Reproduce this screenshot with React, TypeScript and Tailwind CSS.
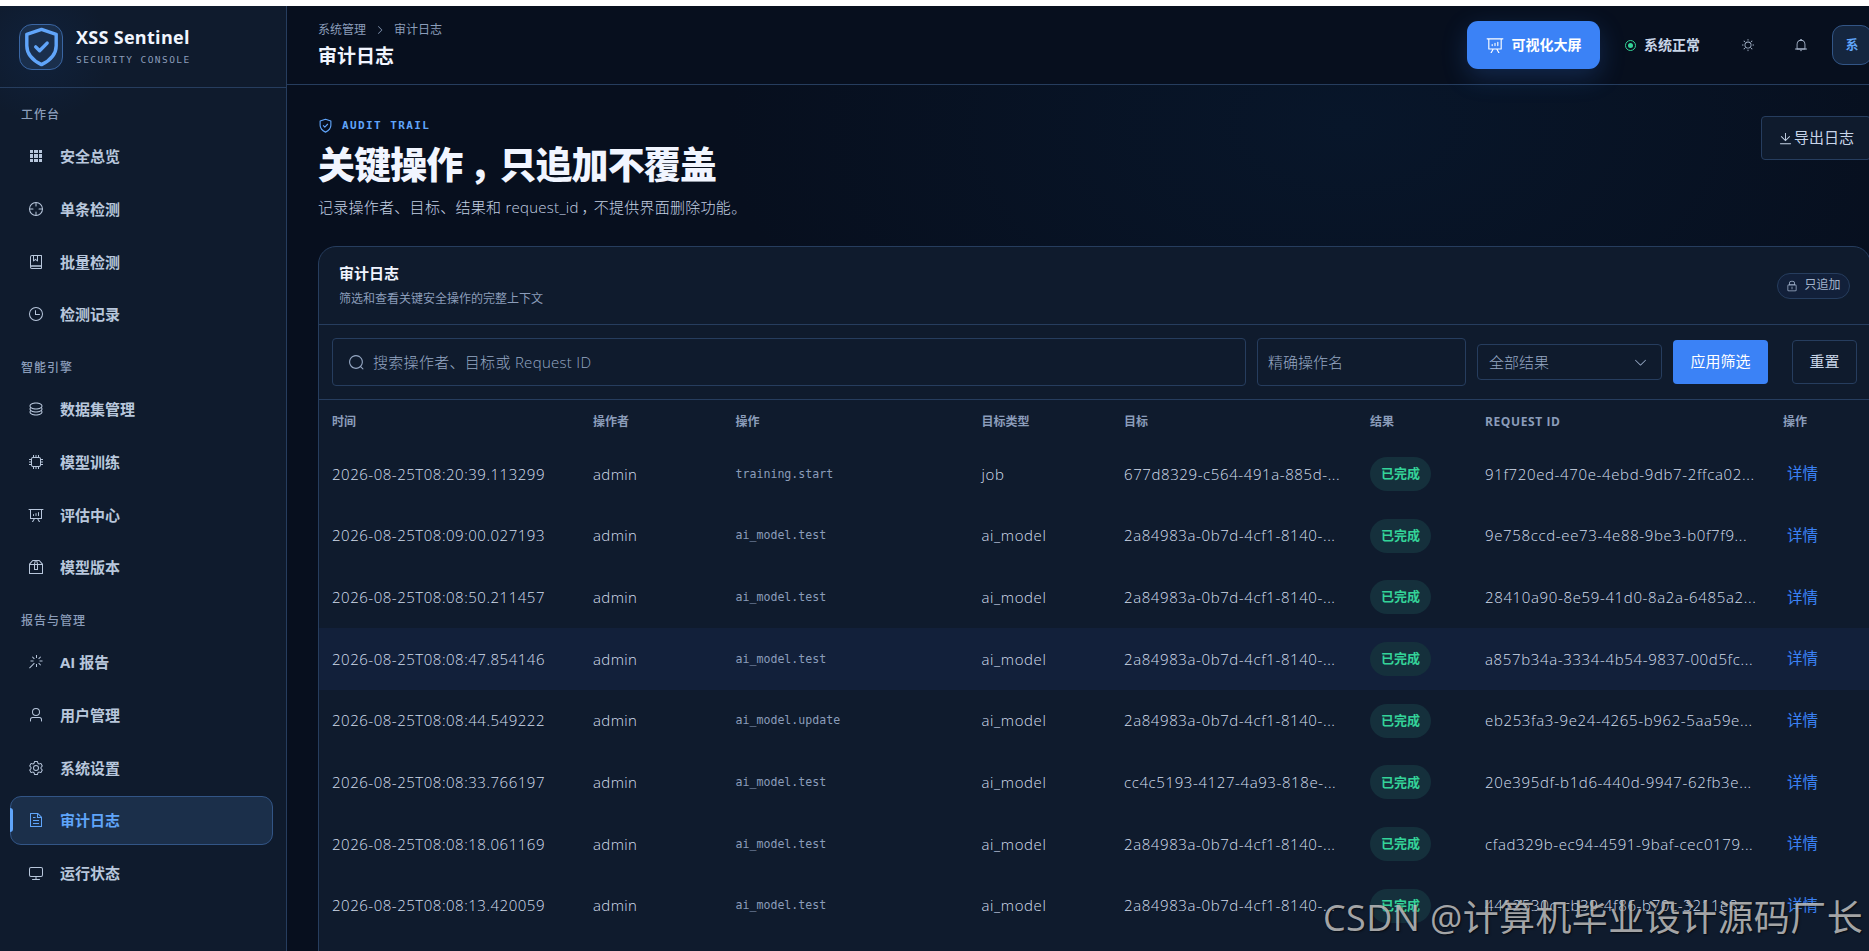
type IconProps = { d: string[]; className?: string };

// All line icons share the 1024 grid.
function Icon({ d, className = "" }: IconProps) {
  return (
    <svg viewBox="0 0 1024 1024" fill="currentColor" aria-hidden="true" className={`shrink-0 ${className}`}>
      {d.map((path) => (
        <path key={path} d={path} />
      ))}
    </svg>
  );
}

function Shield({ className = "", width = 2 }: { className?: string; width?: number }) {
  return (
    <svg viewBox="0 0 24 24" fill="none" stroke="currentColor" strokeWidth={width} strokeLinejoin="round" className={`shrink-0 ${className}`}>
      <path d="M12 2 20.600 4.900V11.500c0 5-3.400 8.500-8.600 11.100C6.800 20 3.400 16.500 3.400 11.500V4.900z" />
      <path d="m8.600 12.200 2.300 2.300 4.400-4.500" strokeLinecap="round" />
    </svg>
  );
}

const RING = "M512 896a384 384 0 1 0 0-768 384 384 0 0 0 0 768m0 64a448 448 0 1 1 0-896 448 448 0 0 1 0 896";

const ICONS = {
  grid: ["M640 384v256H384V384zm64 0h192v256H704zm-64 512H384V704h256zm64 0V704h192v192zm-64-768v192H384V128zm64 0h192v192H704zM320 384v256H128V384zm0 512H128V704h192zm0-768v192H128V128z"],
  aim: [
    RING,
    "M512 96a32 32 0 0 1 32 32v192a32 32 0 0 1-64 0V128a32 32 0 0 1 32-32m0 576a32 32 0 0 1 32 32v192a32 32 0 1 1-64 0V704a32 32 0 0 1 32-32M96 512a32 32 0 0 1 32-32h192a32 32 0 0 1 0 64H128a32 32 0 0 1-32-32m576 0a32 32 0 0 1 32-32h192a32 32 0 1 1 0 64H704a32 32 0 0 1-32-32",
  ],
  collection: [
    "M192 736h640V128H256a64 64 0 0 0-64 64zm64-672h608a32 32 0 0 1 32 32v672a32 32 0 0 1-32 32H160l-32 57.536V192A128 128 0 0 1 256 64",
    "M240 800a48 48 0 1 0 0 96h592v-96zm0-64h656v160a64 64 0 0 1-64 64H240a112 112 0 0 1 0-224m144-608v250.880l96-76.800 96 76.800V128zm-64-64h320v381.440a32 32 0 0 1-51.968 24.960L480 384l-108.032 86.400A32 32 0 0 1 320 445.440z",
  ],
  clock: [RING, "M480 256a32 32 0 0 1 32 32v256a32 32 0 0 1-64 0V288a32 32 0 0 1 32-32", "M480 512h256q32 0 32 32t-32 32H480q-32 0-32-32t32-32"],
  coin: [
    "m161.920 580.736 29.888 58.880C171.328 659.776 160 681.728 160 704c0 82.304 155.328 160 352 160s352-77.696 352-160c0-22.272-11.392-44.160-31.808-64.320l30.464-58.432C903.936 615.808 928 657.664 928 704c0 129.728-188.544 224-416 224S96 833.728 96 704c0-46.592 24.320-88.576 65.920-123.264z",
    "m161.920 388.736 29.888 58.880C171.328 467.840 160 489.792 160 512c0 82.304 155.328 160 352 160s352-77.696 352-160c0-22.272-11.392-44.160-31.808-64.320l30.464-58.432C903.936 423.808 928 465.664 928 512c0 129.728-188.544 224-416 224S96 641.728 96 512c0-46.592 24.320-88.576 65.920-123.264z",
    "M512 544c-227.456 0-416-94.272-416-224S284.544 96 512 96s416 94.272 416 224-188.544 224-416 224m0-64c196.672 0 352-77.696 352-160S708.672 160 512 160s-352 77.696-352 160 155.328 160 352 160",
  ],
  cpu: [
    "M320 256a64 64 0 0 0-64 64v384a64 64 0 0 0 64 64h384a64 64 0 0 0 64-64V320a64 64 0 0 0-64-64zm0-64h384a128 128 0 0 1 128 128v384a128 128 0 0 1-128 128H320a128 128 0 0 1-128-128V320a128 128 0 0 1 128-128",
    "M480 64h64v128h-64zM640 64h64v128h-64zM320 64h64v128h-64zM480 832h64v128h-64zM640 832h64v128h-64zM320 832h64v128h-64zM64 480h128v64H64zM64 320h128v64H64zM64 640h128v64H64zM832 480h128v64H832zM832 320h128v64H832zM832 640h128v64H832z",
  ],
  analysis: ["m665.216 768 110.848 192h-73.856L591.360 768H433.024L322.176 960H248.320l110.848-192H160a32 32 0 0 1-32-32V192H64a32 32 0 0 1 0-64h896a32 32 0 1 1 0 64h-64v544a32 32 0 0 1-32 32zM832 192H192v512h640zM352 448a32 32 0 0 1 32 32v64a32 32 0 0 1-64 0v-64a32 32 0 0 1 32-32m160-64a32 32 0 0 1 32 32v128a32 32 0 0 1-64 0V416a32 32 0 0 1 32-32m160-64a32 32 0 0 1 32 32v192a32 32 0 1 1-64 0V352a32 32 0 0 1 32-32"],
  box: [
    "M317.056 128 128 344.064V896h768V344.064L706.944 128zm-14.528-64h418.944a32 32 0 0 1 24.064 10.880l206.528 236.096A32 32 0 0 1 960 332.032V928a32 32 0 0 1-32 32H96a32 32 0 0 1-32-32V332.032a32 32 0 0 1 7.936-21.120L278.400 75.008A32 32 0 0 1 302.528 64",
    "M64 320h896v64H64z",
    "M448 327.872V640h128V327.872L526.080 128h-28.160zM448 64h128l64 256v352a32 32 0 0 1-32 32H416a32 32 0 0 1-32-32V320z",
  ],
  wand: ["M512 64h64v192h-64zm0 576h64v192h-64zM160 480v-64h192v64zm576 0v-64h192v64zM249.856 199.040l45.248-45.184L430.848 289.600 385.600 334.848 249.856 199.104zM657.152 606.400l45.248-45.248 135.744 135.744-45.248 45.248zM114.048 923.200 68.800 877.952l316.800-316.800 45.248 45.248zM702.400 334.848 657.152 289.600l135.744-135.744 45.248 45.248z"],
  user: ["M512 512a192 192 0 1 0 0-384 192 192 0 0 0 0 384m0 64a256 256 0 1 1 0-512 256 256 0 0 1 0 512m320 320v-96a96 96 0 0 0-96-96H288a96 96 0 0 0-96 96v96a32 32 0 1 1-64 0v-96a160 160 0 0 1 160-160h448a160 160 0 0 1 160 160v96a32 32 0 1 1-64 0"],
  setting: ["M600.704 64a32 32 0 0 1 30.464 22.208l35.200 109.376c14.784 7.232 28.928 15.360 42.432 24.512l112.384-24.192a32 32 0 0 1 34.432 15.360L944.320 364.800a32 32 0 0 1-4.032 37.504l-77.120 85.120a357.120 357.120 0 0 1 0 49.024l77.120 85.248a32 32 0 0 1 4.032 37.504l-88.704 153.600a32 32 0 0 1-34.432 15.296L708.800 803.904c-13.440 9.088-27.648 17.280-42.368 24.512l-35.264 109.376A32 32 0 0 1 600.704 960H423.296a32 32 0 0 1-30.464-22.208L357.696 828.480a351.616 351.616 0 0 1-42.560-24.640l-112.320 24.256a32 32 0 0 1-34.432-15.360L79.680 659.200a32 32 0 0 1 4.032-37.504l77.120-85.248a357.120 357.120 0 0 1 0-48.896l-77.120-85.248A32 32 0 0 1 79.680 364.800l88.704-153.600a32 32 0 0 1 34.432-15.296l112.320 24.256c13.568-9.152 27.776-17.408 42.560-24.640l35.200-109.312A32 32 0 0 1 423.232 64H600.640zm-23.424 64H446.720l-36.352 113.088-24.512 11.968a294.113 294.113 0 0 0-34.816 20.096l-22.656 15.360-116.224-25.088-65.280 113.152 79.680 88.192-1.920 27.136a293.120 293.120 0 0 0 0 40.192l1.920 27.136-79.808 88.192 65.344 113.152 116.224-25.024 22.656 15.296a294.113 294.113 0 0 0 34.816 20.096l24.512 11.968L446.720 896h130.688l36.480-113.152 24.448-11.904a288.282 288.282 0 0 0 34.752-20.096l22.592-15.296 116.288 25.024 65.280-113.152-79.744-88.192 1.920-27.136a293.120 293.120 0 0 0 0-40.256l-1.920-27.136 79.808-88.128-65.344-113.152-116.288 24.960-22.592-15.232a287.616 287.616 0 0 0-34.752-20.096l-24.448-11.904L577.344 128zM512 320a192 192 0 1 1 0 384 192 192 0 0 1 0-384m0 64a128 128 0 1 0 0 256 128 128 0 0 0 0-256"],
  document: ["M832 384H576V128H192v768h640zm-26.496-64L640 154.496V320zM160 64h480l256 256v608a32 32 0 0 1-32 32H160a32 32 0 0 1-32-32V96a32 32 0 0 1 32-32m160 448h384v64H320zm0-192h160v64H320zm0 384h384v64H320z"],
  monitor: ["M544 768v128h192a32 32 0 1 1 0 64H288a32 32 0 1 1 0-64h192V768H192A128 128 0 0 1 64 640V256a128 128 0 0 1 128-128h640a128 128 0 0 1 128 128v384a128 128 0 0 1-128 128zM192 192a64 64 0 0 0-64 64v384a64 64 0 0 0 64 64h640a64 64 0 0 0 64-64V256a64 64 0 0 0-64-64z"],
  bell: [
    "M512 64a64 64 0 0 1 64 64v64H448v-64a64 64 0 0 1 64-64",
    "M256 768h512V448a256 256 0 1 0-512 0zm256-640a320 320 0 0 1 320 320v384H192V448a320 320 0 0 1 320-320",
    "M96 768h832q32 0 32 32t-32 32H96q-32 0-32-32t32-32m352 128h128a64 64 0 0 1-128 0",
  ],
  sunny: ["M512 704a192 192 0 1 0 0-384 192 192 0 0 0 0 384m0 64a256 256 0 1 1 0-512 256 256 0 0 1 0 512m0-704a32 32 0 0 1 32 32v64a32 32 0 0 1-64 0V96a32 32 0 0 1 32-32m0 768a32 32 0 0 1 32 32v64a32 32 0 1 1-64 0v-64a32 32 0 0 1 32-32M195.200 195.200a32 32 0 0 1 45.248 0l45.248 45.248a32 32 0 1 1-45.248 45.248L195.200 240.448a32 32 0 0 1 0-45.248m543.104 543.104a32 32 0 0 1 45.248 0l45.248 45.248a32 32 0 0 1-45.248 45.248l-45.248-45.248a32 32 0 0 1 0-45.248M64 512a32 32 0 0 1 32-32h64a32 32 0 0 1 0 64H96a32 32 0 0 1-32-32m768 0a32 32 0 0 1 32-32h64a32 32 0 1 1 0 64h-64a32 32 0 0 1-32-32M195.200 828.800a32 32 0 0 1 0-45.248l45.248-45.248a32 32 0 0 1 45.248 45.248L240.448 828.800a32 32 0 0 1-45.248 0m543.104-543.104a32 32 0 0 1 0-45.248l45.248-45.248a32 32 0 0 1 45.248 45.248l-45.248 45.248a32 32 0 0 1-45.248 0"],
  download: ["M160 832h704a32 32 0 1 1 0 64H160a32 32 0 1 1 0-64m384-253.696 236.288-236.352 45.248 45.248L508.800 704 192 387.200l45.248-45.248L480 584.704V128h64z"],
  lock: [
    "M224 448a32 32 0 0 0-32 32v384a32 32 0 0 0 32 32h576a32 32 0 0 0 32-32V480a32 32 0 0 0-32-32zm0-64h576a96 96 0 0 1 96 96v384a96 96 0 0 1-96 96H224a96 96 0 0 1-96-96V480a96 96 0 0 1 96-96",
    "M512 544a32 32 0 0 1 32 32v192a32 32 0 1 1-64 0V576a32 32 0 0 1 32-32m192-160v-64a192 192 0 1 0-384 0v64zM512 64a256 256 0 0 1 256 256v128H256V320A256 256 0 0 1 512 64",
  ],
  search: ["m795.904 750.720 124.992 124.928a32 32 0 0 1-45.248 45.248L750.656 795.904a416 416 0 1 1 45.248-45.248zM480 832a352 352 0 1 0 0-704 352 352 0 0 0 0 704"],
  arrow: ["M831.872 340.864 512 652.672 192.128 340.864a30.592 30.592 0 0 0-42.752 0 29.120 29.120 0 0 0 0 41.600L489.664 714.240a32 32 0 0 0 44.672 0l340.288-331.712a29.120 29.120 0 0 0 0-41.728 30.592 30.592 0 0 0-42.752 0z"],
};

const NAV = [
  {
    title: "工作台",
    items: [
      { label: "安全总览", icon: ICONS.grid },
      { label: "单条检测", icon: ICONS.aim },
      { label: "批量检测", icon: ICONS.collection },
      { label: "检测记录", icon: ICONS.clock },
    ],
  },
  {
    title: "智能引擎",
    items: [
      { label: "数据集管理", icon: ICONS.coin },
      { label: "模型训练", icon: ICONS.cpu },
      { label: "评估中心", icon: ICONS.analysis },
      { label: "模型版本", icon: ICONS.box },
    ],
  },
  {
    title: "报告与管理",
    items: [
      { label: "AI 报告", icon: ICONS.wand },
      { label: "用户管理", icon: ICONS.user },
      { label: "系统设置", icon: ICONS.setting },
      { label: "审计日志", icon: ICONS.document, active: true },
      { label: "运行状态", icon: ICONS.monitor },
    ],
  },
];

const ROWS = [
  { time: "2026-08-25T08:20:39.113299", action: "training.start", type: "job", target: "677d8329-c564-491a-885d-...", request: "91f720ed-470e-4ebd-9db7-2ffca02..." },
  { time: "2026-08-25T08:09:00.027193", action: "ai_model.test", type: "ai_model", target: "2a84983a-0b7d-4cf1-8140-...", request: "9e758ccd-ee73-4e88-9be3-b0f7f9..." },
  { time: "2026-08-25T08:08:50.211457", action: "ai_model.test", type: "ai_model", target: "2a84983a-0b7d-4cf1-8140-...", request: "28410a90-8e59-41d0-8a2a-6485a2..." },
  { time: "2026-08-25T08:08:47.854146", action: "ai_model.test", type: "ai_model", target: "2a84983a-0b7d-4cf1-8140-...", request: "a857b34a-3334-4b54-9837-00d5fc...", hover: true },
  { time: "2026-08-25T08:08:44.549222", action: "ai_model.update", type: "ai_model", target: "2a84983a-0b7d-4cf1-8140-...", request: "eb253fa3-9e24-4265-b962-5aa59e..." },
  { time: "2026-08-25T08:08:33.766197", action: "ai_model.test", type: "ai_model", target: "cc4c5193-4127-4a93-818e-...", request: "20e395df-b1d6-440d-9947-62fb3e..." },
  { time: "2026-08-25T08:08:18.061169", action: "ai_model.test", type: "ai_model", target: "2a84983a-0b7d-4cf1-8140-...", request: "cfad329b-ec94-4591-9baf-cec0179..." },
  { time: "2026-08-25T08:08:13.420059", action: "ai_model.test", type: "ai_model", target: "2a84983a-0b7d-4cf1-8140-...", request: "4412530c-cb39-4f86-b70c-3211e8..." },
];

const COLS = "grid grid-cols-[261px_142.5px_246px_142.500px_246px_115px_298px_1fr] items-center pl-[13px]";

// Full-width comma set in the middle of its cell.
function Comma() {
  return <span className="inline-block w-[1em] indent-[0.18em]">，</span>;
}

function Sidebar() {
  return (
    <aside className="flex w-[287px] shrink-0 flex-col border-r border-[#263d5e] bg-[#0f1b2d] bg-[radial-gradient(circle_at_40px_45px,#10213b_0px,#0f1b2d_70px)]">
      <div className="flex h-[82px] shrink-0 items-center border-b border-[#263d5e] pl-[19px]">
        <div className="flex h-[46px] w-[44px] items-center justify-center rounded-[13px] border border-[#3a66a3] bg-[#1a2f4c]">
          <Shield className="size-[41px] text-[#60a5fa]" />
        </div>
        <div className="ml-[13px]">
          <p className="text-[18px] leading-[22px] font-bold tracking-[0.3px] text-[#f1f5ff]">XSS Sentinel</p>
          <p className="mt-[5px] font-['DejaVu_Sans_Mono',monospace] text-[9.5px] leading-[14px] tracking-[1.45px] text-[#8b9dba]">SECURITY CONSOLE</p>
        </div>
      </div>
      <nav className="flex flex-col px-[10px] pt-[16.6px]">
        {NAV.map((group) => (
          <div key={group.title} className="mb-[19px]">
            <h2 className="mb-[7.3px] pl-[11px] text-[12px] leading-[20px] font-medium tracking-[1px] text-[#8b9dba]">{group.title}</h2>
            <ul className="flex flex-col gap-[4.4px]">
              {group.items.map((item) => (
                <li
                  key={item.label}
                  className={`relative flex h-[48.4px] w-[263px] items-center rounded-[11px] border pl-[17px] ${
                    "active" in item ? "border-[#325586] bg-[#1b2f4a] text-[#60a5fa]" : "border-transparent text-[#b8c7dc]"
                  }`}
                >
                  {"active" in item && <span className="absolute top-[11px] -left-px h-[24px] w-[3px] rounded-r bg-[#60a5fa]" />}
                  <Icon d={item.icon} className="size-[16px]" />
                  <span className="ml-[16px] text-[15px] leading-[22px] font-bold">{item.label}</span>
                </li>
              ))}
            </ul>
          </div>
        ))}
      </nav>
    </aside>
  );
}

function TopBar() {
  return (
    <header className="flex h-[79px] shrink-0 items-center border-b border-[#263d5e] bg-[#070f1e] pl-[31px]">
      <div>
        <div className="flex items-center gap-[11px] text-[12px] leading-[18px] text-[#8b9dba]">
          <span>系统管理</span>
          <Icon d={ICONS.arrow} className="w-[6px] -rotate-90 scale-[1.8]" />
          <span>审计日志</span>
        </div>
        <h1 className="mt-[4px] text-[19px] leading-[26px] font-bold text-[#f1f5ff]">审计日志</h1>
      </div>
      <div className="ml-auto -mr-[3px] flex items-center">
        <button className="flex h-[48px] w-[133px] items-center justify-center gap-[8px] rounded-[11px] bg-[#3b82f6] text-[14px] font-bold text-white shadow-[0_8px_26px_rgba(59,130,246,0.22)]">
          <Icon d={ICONS.analysis} className="size-[18px]" />
          <span className="leading-[20px]">可视化大屏</span>
        </button>
        <span className="ml-[25px] flex size-[11px] items-center justify-center rounded-full border border-[#34d399]">
          <span className="size-[5px] rounded-full bg-[#34d399]" />
        </span>
        <span className="ml-[8px] w-[57px] pb-px text-[14px] font-semibold text-[#c8d5e8]">系统正常</span>
        <Icon d={ICONS.sunny} className="ml-[40px] size-[14px] text-[#a9b8ce]" />
        <Icon d={ICONS.bell} className="ml-[39px] size-[14px] text-[#a9b8ce]" />
        <span className="ml-[24px] flex size-[40px] items-center justify-center rounded-[11px] border border-[#325586] bg-[#15263f] text-[13px] font-bold text-[#60a5fa]">系</span>
      </div>
    </header>
  );
}

function Filters() {
  const field = "flex items-center rounded border border-[#263d5e] text-[15px] text-[#95a7c3]";
  return (
    <div className="flex h-[75px] items-center border-b border-[#263d5e] pl-[13px]">
      <div className={`${field} h-[48px] w-[914px] pl-[15px]`}>
        <Icon d={ICONS.search} className="size-[17px]" />
        <span className="ml-[8px] font-light tracking-[0.3px]">搜索操作者、目标或 Request ID</span>
      </div>
      <div className={`${field} ml-[11px] h-[48px] w-[209px] pl-[10px] font-light`}>精确操作名</div>
      <div className={`${field} ml-[11px] h-[36px] w-[185px] justify-between pr-[13px] pl-[11px] font-light`}>
        全部结果
        <Icon d={ICONS.arrow} className="size-[15px]" />
      </div>
      <button className="ml-[11px] h-[44px] w-[95px] rounded bg-[#3b82f6] pb-px text-[15px] text-white">应用筛选</button>
      <button className="ml-[24px] h-[44px] w-[65px] rounded border border-[#263d5e] pb-px text-[15px] text-[#c8d5e8]">重置</button>
    </div>
  );
}

function AuditCard() {
  return (
    <section className="mt-[26px] h-[900px] w-[1553px] rounded-[18px] border border-[#263d5e] bg-[#0f1b2d]">
      <div className="flex h-[78px] items-center justify-between border-b border-[#263d5e] pr-[20px] pl-[20px]">
        <div className="pb-[2px]">
          <h3 className="text-[15px] leading-[22px] font-bold text-[#f1f5ff]">审计日志</h3>
          <p className="mt-[6px] text-[12px] leading-[18px] text-[#8b9dba]">筛选和查看关键安全操作的完整上下文</p>
        </div>
        <span className="flex h-[26px] w-[73px] items-center justify-center gap-[6px] rounded-full border border-[#263d5e] bg-[#12203a] text-[12px] text-[#a3b4cd]">
          <Icon d={ICONS.lock} className="size-[12px]" />
          <span className="pb-px leading-[18px]">只追加</span>
        </span>
      </div>
      <Filters />
      <div className={`${COLS} h-[43px] text-[12px] font-bold text-[#8b9dba]`}>
        <span>时间</span>
        <span>操作者</span>
        <span>操作</span>
        <span>目标类型</span>
        <span>目标</span>
        <span>结果</span>
        <span className="tracking-[0.600px]">REQUEST ID</span>
        <span>操作</span>
      </div>
      {ROWS.map((row) => (
        <div key={row.time} className={`${COLS} h-[61.7px] text-[15px] font-light text-[#d3deed] ${row.hover ? "bg-[#12203a]" : ""}`}>
          <span className="tracking-[0.520px]">{row.time}</span>
          <span className="tracking-[0.4px]">admin</span>
          <span className="pt-px font-['DejaVu_Sans_Mono',monospace] text-[11.600px] text-[#8b9dba]">{row.action}</span>
          <span className="tracking-[0.600px]">{row.type}</span>
          <span className="tracking-[0.600px]">{row.target}</span>
          <span className="flex h-[34px] w-[61px] items-center justify-center rounded-full bg-[#15303c] text-[13px] font-semibold text-[#34d399]">已完成</span>
          <span className="tracking-[0.640px]">{row.request}</span>
          <span className="pl-[4px] text-[15.500px] font-normal text-[#3b82f6]">详情</span>
        </div>
      ))}
    </section>
  );
}

export default function App() {
  return (
    <div className="relative h-[951px] w-[1869px] overflow-hidden bg-white pt-[6px] font-['Open_Sans','Noto_Sans_CJK_SC',sans-serif]">
      <div className="flex h-[945px] bg-[#070f1e]">
        <Sidebar />
        <div className="flex min-w-0 flex-1 flex-col bg-[radial-gradient(ellipse_620px_360px_at_1060px_120px,#08162a_0%,#070f1e_100%)]">
          <TopBar />
          <main className="flex flex-col pl-[31px]">
            <div className="flex items-start justify-between pt-[31px]">
              <div>
                <p className="flex items-center gap-[9px] pt-px font-['DejaVu_Sans_Mono',monospace] text-[11px] leading-[17px] font-bold tracking-[1.4px] text-[#60a5fa]">
                  <Shield className="size-[15px]" width={1.8} />
                  AUDIT TRAIL
                </p>
                <h2 className="mt-[7px] text-[37px] leading-[48px] font-black tracking-[-0.9px] text-[#f1f5ff]">
                  关键操作
                  <Comma />
                  只追加不覆盖
                </h2>
                <p className="mt-[6px] mb-px text-[15px] leading-[24px] font-light tracking-[0.270px] text-[#c3d0e3]">
                  记录操作者、目标、结果和 request_id
                  <Comma />
                  不提供界面删除功能。
                </p>
              </div>
              <button className="-mr-[2px] flex h-[44px] w-[110px] items-center rounded border border-[#263d5e] bg-[#0f1b2d] pl-[16px] text-[15px] text-[#c8d5e8]">
                <Icon d={ICONS.download} className="mr-px size-[15px]" />
                <span className="shrink-0 pb-px">导出日志</span>
              </button>
            </div>
            <AuditCard />
          </main>
        </div>
      </div>
      <p className="absolute top-[892px] left-[1323px] text-[36px] leading-[52px] tracking-[0.4px] whitespace-nowrap text-[#c0c0c0]/85 [text-shadow:1px_1px_2px_rgba(0,0,0,0.6)]">
        CSDN @计算机毕业设计源码厂长
      </p>
    </div>
  );
}
